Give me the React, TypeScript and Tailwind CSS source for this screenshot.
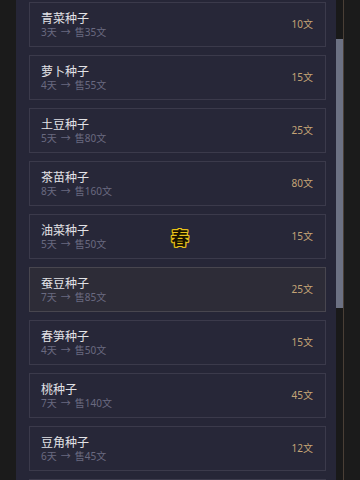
import React from "react";

const items = [
  { name: "青菜种子", days: 3, sell: 35, price: 10 },
  { name: "萝卜种子", days: 4, sell: 55, price: 15 },
  { name: "土豆种子", days: 5, sell: 80, price: 25 },
  { name: "茶苗种子", days: 8, sell: 160, price: 80 },
  { name: "油菜种子", days: 5, sell: 50, price: 15 },
  { name: "蚕豆种子", days: 7, sell: 85, price: 25, hover: true },
  { name: "春笋种子", days: 4, sell: 50, price: 15 },
  { name: "桃种子", days: 7, sell: 140, price: 45 },
  { name: "豆角种子", days: 6, sell: 45, price: 12 },
  { name: "西瓜种子", days: 9, sell: 200, price: 60 },
];

export default function App() {
  return (
    <div
      className="relative flex h-[480px] w-[360px] overflow-hidden bg-[#1b1b1b]"
      style={{ fontFamily: '"Noto Sans", "Noto Sans CJK SC", sans-serif' }}
    >
      <div className="w-[16px] shrink-0 bg-[#1b1b1b]" />
      <div className="flex w-[320px] shrink-0 flex-col gap-[8px] bg-[#262637] pl-[13px] pr-[10px] pt-[2px]">
        {items.map((it) => (
          <div
            key={it.name}
            className={`flex h-[45px] w-[297px] shrink-0 items-center justify-between border pl-[11px] pr-[12px] ${
              it.hover ? "border-[#48464f] bg-[#2d2c37]" : "border-[#3b3a4b] bg-[#272738]"
            }`}
          >
            <div className="flex flex-col pt-[1px]">
              <div className="text-[12px] leading-[15px] text-[#e2e2e6]">{it.name}</div>
              <div className="flex items-center text-[10px] leading-[13px] text-[#6a6a80]">
                <span>{it.days}天</span>
                <span className="mx-[4px]">→</span>
                <span>售{it.sell}文</span>
              </div>
            </div>
            <div className="text-[10px] text-[#c4a476]">{it.price}文</div>
          </div>
        ))}
      </div>
      <div className="flex w-[7px] shrink-0 flex-col bg-[#191919] pt-[39px]">
        <div className="h-[269px] w-full bg-[#6c7183]" />
      </div>
      <div className="w-[1px] shrink-0 bg-[#4a3f36]" />
      <div className="flex-1 bg-[#1b1b1b]" />
      <div
        className="absolute left-[171px] top-[228px] text-[18px] font-bold leading-[20px] text-[#1a1400]"
        style={{
          textShadow:
            "1px 0 0 #e8c21a, -1px 0 0 #e8c21a, 0 1px 0 #e8c21a, 0 -1px 0 #e8c21a, 1px 1px 0 #e8c21a, -1px -1px 0 #e8c21a, 1px -1px 0 #e8c21a, -1px 1px 0 #e8c21a",
        }}
      >
        春
      </div>
    </div>
  );
}
